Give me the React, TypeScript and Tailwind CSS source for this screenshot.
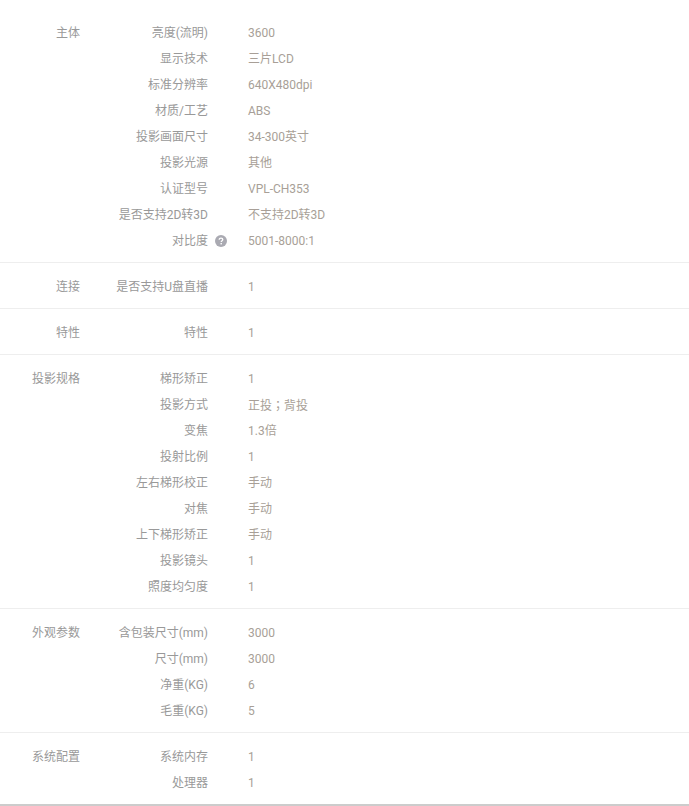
interface SpecRow {
  label: string;
  value: string;
  help?: boolean;
  centeredPunct?: boolean;
}

interface SpecGroup {
  title: string;
  rows: SpecRow[];
}

const groups: SpecGroup[] = [
  {
    title: "主体",
    rows: [
      { label: "亮度(流明)", value: "3600" },
      { label: "显示技术", value: "三片LCD" },
      { label: "标准分辨率", value: "640X480dpi" },
      { label: "材质/工艺", value: "ABS" },
      { label: "投影画面尺寸", value: "34-300英寸" },
      { label: "投影光源", value: "其他" },
      { label: "认证型号", value: "VPL-CH353" },
      { label: "是否支持2D转3D", value: "不支持2D转3D" },
      { label: "对比度", value: "5001-8000:1", help: true },
    ],
  },
  { title: "连接", rows: [{ label: "是否支持U盘直播", value: "1" }] },
  { title: "特性", rows: [{ label: "特性", value: "1" }] },
  {
    title: "投影规格",
    rows: [
      { label: "梯形矫正", value: "1" },
      { label: "投影方式", value: "正投；背投", centeredPunct: true },
      { label: "变焦", value: "1.3倍" },
      { label: "投射比例", value: "1" },
      { label: "左右梯形校正", value: "手动" },
      { label: "对焦", value: "手动" },
      { label: "上下梯形矫正", value: "手动" },
      { label: "投影镜头", value: "1" },
      { label: "照度均匀度", value: "1" },
    ],
  },
  {
    title: "外观参数",
    rows: [
      { label: "含包装尺寸(mm)", value: "3000" },
      { label: "尺寸(mm)", value: "3000" },
      { label: "净重(KG)", value: "6" },
      { label: "毛重(KG)", value: "5" },
    ],
  },
  {
    title: "系统配置",
    rows: [
      { label: "系统内存", value: "1" },
      { label: "处理器", value: "1" },
    ],
  },
];

function HelpIcon() {
  return (
    <svg
      viewBox="0 0 12 12"
      className="absolute top-[7px] right-[-19px] h-3 w-3"
    >
      <circle cx="6" cy="6" r="6" fill="#aaaab2" />
      <path
        d="M4.2 4.8C4.2 3.7 5 3.1 6 3.1C7 3.1 7.8 3.7 7.8 4.6C7.8 5.7 6.2 5.8 6.2 7.1"
        fill="none"
        stroke="#fff"
        strokeWidth="1.3"
      />
      <rect x="5.5" y="8" width="1.4" height="1.4" fill="#fff" />
    </svg>
  );
}

export default function App() {
  return (
    <div className="h-[806px] w-[689px] overflow-hidden bg-white pt-[9px] font-['Roboto','Noto_Sans_CJK_SC',sans-serif] text-xs text-[#999]">
      {groups.map((group) => (
        <div
          key={group.title}
          className="flex border-b border-[#eeeeee] pt-[11px] pb-2 last:border-b-2 last:border-[#cccccc]"
        >
          <div className="w-20 shrink-0 text-right leading-[26px]">
            {group.title}
          </div>
          <div className="flex-1">
            {group.rows.map((row) => (
              <div key={row.label} className="flex h-[26px] leading-[26px]">
                <div className="relative w-32 shrink-0 text-right">
                  {row.label}
                  {row.help && <HelpIcon />}
                </div>
                <div
                  className={
                    row.centeredPunct
                      ? "pl-10 font-['Noto_Sans_CJK_TC',sans-serif] text-[#a89f97]"
                      : "pl-10 text-[#a89f97]"
                  }
                >
                  {row.value}
                </div>
              </div>
            ))}
          </div>
        </div>
      ))}
    </div>
  );
}
